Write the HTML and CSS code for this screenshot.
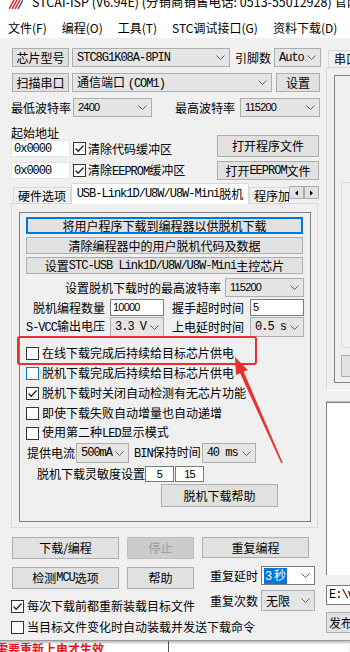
FILE: index.html
```html
<!DOCTYPE html>
<html lang="zh-CN">
<head>
<meta charset="utf-8">
<title>STCAI-ISP</title>
<link rel="stylesheet" href="styles.css">
</head>
<body>
<header class="titlebar">
  <svg class="logo" viewBox="0 0 14 9" aria-hidden="true">
    <path d="M0 9 L5 0 M3 9 L8 0 M6 9 L11 0" stroke="#e0262c" stroke-width="1.5" fill="none"/>
    <path d="M9 9 L14 0" stroke="#2a55a8" stroke-width="1.5" fill="none"/>
  </svg>
  <span class="title">STCAI-ISP (V6.94E) (分销商销售电话: 0513-55012928) 官网</span>
</header>
<nav class="menubar">
  <span>文件(F)</span><span>编程(O)</span><span>工具(T)</span><span>STC调试接口(G)</span><span>资料下载(D)</span><span>工</span>
</nav>
<main class="window">
  <section class="left">
    <div class="row r19">
      <div class="btn w57">芯片型号</div>
      <div class="sel w158 ml3"><span class="m">STC8G1K08A-8PIN</span><svg class="chev" viewBox="0 0 9 5"><path d="M.5 .5 4.5 4.5 8.5 .5"/></svg></div>
      <span class="ml5">引脚数</span>
      <div class="sel w47 ml3"><span class="m">Auto</span><svg class="chev" viewBox="0 0 9 5"><path d="M.5 .5 4.5 4.5 8.5 .5"/></svg></div>
    </div>
    <div class="row r19 mt6">
      <div class="btn w57">扫描串口</div>
      <div class="sel w200 ml3"><span>通信端口 <span class="m">(COM1)</span></span><svg class="chev" viewBox="0 0 9 5"><path d="M.5 .5 4.5 4.5 8.5 .5"/></svg></div>
      <div class="btn w44 ml4">设置</div>
    </div>
    <div class="row r19 mt6">
      <span class="lbl60 mln1">最低波特率</span>
      <div class="sel w79 ml2"><span class="s">2400</span><svg class="chev" viewBox="0 0 9 5"><path d="M.5 .5 4.5 4.5 8.5 .5"/></svg></div>
      <span class="lbl60 ml23">最高波特率</span>
      <div class="sel w80 ml5"><span class="s">115200</span><svg class="chev" viewBox="0 0 9 5"><path d="M.5 .5 4.5 4.5 8.5 .5"/></svg></div>
    </div>
    <div class="addr">
      <div class="addr-l">
        <div class="addr-title">起始地址</div>
        <div class="row r17">
          <div class="inp w59"><span class="m">0x0000</span></div>
          <span class="cb ml3"><svg class="ck" viewBox="0 0 11 11"><path d="M1.5 5.5 4.2 8.2 9.5 2.5"/></svg></span>
          <span class="ml2">清除代码缓冲区</span>
        </div>
        <div class="row r17 mt5">
          <div class="inp w59"><span class="m">0x0000</span></div>
          <span class="cb ml3"><svg class="ck" viewBox="0 0 11 11"><path d="M1.5 5.5 4.2 8.2 9.5 2.5"/></svg></span>
          <span class="ml2">清除<span class="m">EEPROM</span>缓冲区</span>
        </div>
      </div>
      <div class="addr-r">
        <div class="btn h22 mt10">打开程序文件</div>
        <div class="btn h19 mt4">打开<span class="m">EEPROM</span>文件</div>
      </div>
    </div>
    <div class="tabs">
      <div class="tab t1">硬件选项</div>
      <div class="tab active"><span class="m">USB-Link1D/U8W/U8W-Mini</span>脱机</div>
      <div class="tab t3"><span>程序加</span></div>
      <div class="spin"><span class="sp"><svg viewBox="0 0 4 7"><path d="M4 0 L0 3.5 L4 7Z"/></svg></span><span class="sp"><svg viewBox="0 0 4 7"><path d="M0 0 L4 3.5 L0 7Z"/></svg></span></div>
    </div>
    <div class="tabpanel">
      <div class="group">
        <div class="gbtn default">将用户程序下载到编程器以供脱机下载</div>
        <div class="gbtn mt3">清除编程器中的用户脱机代码及数据</div>
        <div class="gbtn mt3">设置<span class="m">STC-USB Link1D/U8W/U8W-Mini</span>主控芯片</div>
        <div class="row r19 mt4 baud">
          <span class="mr4">设置脱机下载时的最高波特率</span>
          <div class="sel w79"><span class="s">115200</span><svg class="chev" viewBox="0 0 9 5"><path d="M.5 .5 4.5 4.5 8.5 .5"/></svg></div>
        </div>
        <div class="grid4 r17 mt2">
          <span class="gl">脱机编程数量</span>
          <div class="inp dark"><span class="s">10000</span></div>
          <span class="gl">握手超时时间</span>
          <div class="inp dark"><span class="s">5</span></div>
        </div>
        <div class="grid4 r20 mt1">
          <span class="gl"><span class="m">S-VCC</span>输出电压</span>
          <div class="sel"><span class="m">3.3 V</span><svg class="chev" viewBox="0 0 9 5"><path d="M.5 .5 4.5 4.5 8.5 .5"/></svg></div>
          <span class="gl">上电延时时间</span>
          <div class="sel"><span class="m">0.5 s</span><svg class="chev" viewBox="0 0 9 5"><path d="M.5 .5 4.5 4.5 8.5 .5"/></svg></div>
        </div>
        <div class="cbs">
          <div class="cbrow"><span class="cb"></span><span>在线下载完成后持续给目标芯片供电</span></div>
          <div class="cbrow"><span class="cb hover"></span><span>脱机下载完成后持续给目标芯片供电</span></div>
          <div class="cbrow"><span class="cb"><svg class="ck" viewBox="0 0 11 11"><path d="M1.5 5.5 4.2 8.2 9.5 2.5"/></svg></span><span>脱机下载时关闭自动检测有无芯片功能</span></div>
          <div class="cbrow"><span class="cb"></span><span>即使下载失败自动增量也自动递增</span></div>
          <div class="cbrow"><span class="cb"></span><span>使用第二种<span class="m">LED</span>显示模式</span></div>
        </div>
        <div class="row r20 cur">
          <span>提供电流</span>
          <div class="sel w53 ml1"><span class="m">500mA</span><svg class="chev" viewBox="0 0 9 5"><path d="M.5 .5 4.5 4.5 8.5 .5"/></svg></div>
          <span class="ml5"><span class="m">BIN</span>保持时间</span>
          <div class="sel w54 ml1"><span class="m">40 ms</span><svg class="chev" viewBox="0 0 9 5"><path d="M.5 .5 4.5 4.5 8.5 .5"/></svg></div>
        </div>
        <div class="row r16 mt3 sens">
          <span class="w108">脱机下载灵敏度设置</span>
          <div class="inp dark w29 c"><span class="s">5</span></div>
          <div class="inp dark w29 c ml1"><span class="s">15</span></div>
        </div>
        <div class="btn helpbtn mt2">脱机下载帮助</div>
        <div class="redbox"></div>
        <svg class="arrow" viewBox="0 0 70 120" aria-hidden="true">
          <path d="M10 4 L22.8 16.9 L18.7 18.7 L57.7 109.7 L56.3 110.3 L15.1 20.3 L11 22.1 Z" fill="#e8302e"/>
        </svg>
      </div>
    </div>
    <div class="bottom">
      <div class="bl">
        <div class="row r22">
          <div class="btn w107">下载/编程</div>
          <div class="btn w67 ml8 disabled">停止</div>
        </div>
        <div class="row r22 mt8">
          <div class="btn w107">检测<span class="m">MCU</span>选项</div>
          <div class="btn w67 ml8">帮助</div>
        </div>
        <div class="row r16 mt9 mln1">
          <span class="cb"><svg class="ck" viewBox="0 0 11 11"><path d="M1.5 5.5 4.2 8.2 9.5 2.5"/></svg></span>
          <span class="ml3">每次下载前都重新装载目标文件</span>
        </div>
        <div class="row r16 mt5 mln1">
          <span class="cb"></span>
          <span class="ml3">当目标文件变化时自动装载并发送下载命令</span>
        </div>
      </div>
      <div class="br">
        <div class="btn w107 h21">重复编程</div>
        <div class="row r19 mt8">
          <span class="ml8">重复延时</span>
          <div class="sel w54 ml3 focus"><span class="hl"><span class="m">3</span>&nbsp;秒</span><svg class="chev" viewBox="0 0 9 5"><path d="M.5 .5 4.5 4.5 8.5 .5"/></svg></div>
        </div>
        <div class="row r21 mt5">
          <span class="ml8">重复次数</span>
          <div class="sel w54 ml3"><span>无限</span><svg class="chev" viewBox="0 0 9 5"><path d="M.5 .5 4.5 4.5 8.5 .5"/></svg></div>
        </div>
      </div>
    </div>
  </section>
  <section class="right">
    <div class="rtab">串口</div>
    <div class="rpanel">
      <div class="rbox">
        <div class="rbox2"></div>
        <div class="rbtn"></div>
      </div>
    </div>
    <div class="rsep"></div>
    <div class="rtext"></div>
    <div class="rinp"><span class="m">E:\v</span></div>
    <div class="rbtn2">发布</div>
  </section>
</main>
<footer class="below">
  <span class="warn">需要重新上电才生效</span>
  <span class="vline"></span>
</footer>
</body>
</html>
```

FILE: styles.css
```css
* { box-sizing: border-box; margin: 0; padding: 0; }
html, body { width: 350px; height: 652px; overflow: hidden; }
body {
  background: #f0f0f0;
  font-family: "Noto Sans CJK SC", "Noto Sans", sans-serif;
  font-size: 12px;
  line-height: 1;
  color: #000;
}
.m { font-family: "Liberation Mono", "DejaVu Sans Mono", monospace; font-size: 12px; letter-spacing: -1px; }
.s { font-family: "Liberation Sans", Arial, sans-serif; font-size: 11px; letter-spacing: -0.8px; }

.titlebar { height: 17px; background: #fff; display: flex; align-items: flex-start; overflow: hidden; }
.logo { width: 14px; height: 9px; margin-left: 9px; flex: none; }
.title { font-size: 12.5px; line-height: 12px; margin-top: -4px; margin-left: 9px; white-space: nowrap; }

.menubar { height: 21px; background: #fff; display: flex; align-items: center; padding-left: 8px; gap: 15px; white-space: nowrap; overflow: hidden; }

.window { display: flex; height: 602px; overflow: hidden; }
.left { width: 326px; flex: none; padding: 10px 0 0 12px; }
.right { flex: 1; overflow: hidden; }

.row { display: flex; align-items: center; white-space: nowrap; }

.btn {
  display: flex; align-items: center; justify-content: center;
  background: #e1e1e1; border: 1px solid #adadad; height: 100%; white-space: nowrap; flex: none;
}
.btn.disabled { background: #cccccc; border-color: #bfbfbf; color: #9a9a9a; }
.sel {
  display: flex; align-items: center; height: 100%;
  background: #e5e5e5; border: 1px solid #adadad;
  padding: 0 4px 0 4px; white-space: nowrap; flex: none; overflow: hidden;
}
.sel.focus { background: #fff; border-color: #7a7a7a; padding-left: 2px; }
.hl { background: #0078d7; color: #fff; padding: 1px 1px; }
.chev { width: 9px; height: 5px; fill: none; stroke: #606060; stroke-width: 1; margin-left: auto; flex: none; }
.inp {
  display: flex; align-items: center; height: 100%; background: #fff;
  border: 1px solid #e6e6e6; padding-left: 2px; flex: none; white-space: nowrap;
}
.inp.dark { border-color: #7a7a7a; }
.inp.c { justify-content: center; padding-left: 0; }
.cb { width: 13px; height: 13px; border: 1px solid #333; background: #fff; flex: none; display: flex; align-items: center; justify-content: center; }
.cb.hover { border-color: #0078d7; }
.ck { width: 11px; height: 11px; fill: none; stroke: #222; stroke-width: 1.3; }

.addr { display: flex; margin-top: 8px; margin-left: -1px; height: 55px; }
.addr-l { width: 206px; }
.addr-r { width: 102px; display: flex; flex-direction: column; }
.addr-title { height: 15px; line-height: 15px; }

.tabs { display: flex; align-items: flex-end; height: 20px; margin-top: 3px; margin-left: -1px; position: relative; z-index: 1; }
.tab { height: 16px; border: 1px solid #d9d9d9; border-bottom: none; background: #f0f0f0; display: flex; align-items: center; justify-content: center; white-space: nowrap; overflow: hidden; flex: none; }
.t1 { width: 58px; margin-left: 2px; }
.tab.active { width: 178px; height: 21px; background: #fff; margin-bottom: -1px; padding-bottom: 1px; }
.t3 { width: 40px; justify-content: flex-start; padding-left: 4px; border-right: none; }
.spin { display: flex; align-self: flex-start; margin-top: 3px; }
.sp { width: 15px; height: 13px; border: 1px solid #adadad; background: #e1e1e1; display: flex; align-items: center; justify-content: center; }
.sp svg { width: 3px; height: 6px; fill: #000; }

.tabpanel { width: 307px; height: 325px; margin-left: -1px; border: 1px solid #d9d9d9; background: #f0f0f0; padding: 8px 0 0 7px; }
.group { position: relative; width: 292px; height: 310px; border: 1px solid #808080; padding-top: 4px; }
.gbtn { margin-left: 6px; width: 277px; height: 17px; background: #e1e1e1; border: 1px solid #adadad; display: flex; align-items: center; justify-content: center; white-space: nowrap; }
.gbtn.default { border: 2px solid #0078d7; }
.baud { justify-content: flex-end; padding-right: 6px; }
.grid4 { display: grid; grid-template-columns: 90px 54px 86px 54px; align-items: stretch; white-space: nowrap; }
.grid4 > .gl { text-align: right; align-self: center; }
.grid4 > .gl:first-child { padding-right: 5px; }
.grid4 > .gl:nth-child(3) { padding-right: 6px; }
.cbs { margin-top: 6px; }
.cbrow { height: 20px; display: flex; align-items: center; padding-left: 6px; gap: 3px; white-space: nowrap; }
.cur { padding-left: 7px; }
.sens { padding-left: 17px; }
.helpbtn { width: 117px; height: 23px; margin-left: 141px; }
.redbox { position: absolute; left: -3px; top: 123px; width: 240px; height: 29px; border: 2.5px solid #e8302e; border-radius: 3px; }
.arrow { position: absolute; left: 205px; top: 140px; width: 70px; height: 120px; }

.bottom { display: flex; margin-top: 9px; }
.bl { width: 190px; }
.br { width: 118px; }

.rtab { margin-top: 12px; margin-left: 2px; height: 17px; border: 1px solid #d9d9d9; border-right: none; border-bottom: none; background: #f0f0f0; padding-left: 5px; display: flex; align-items: center; white-space: nowrap; }
.rpanel { height: 323px; border-left: 1px solid #d9d9d9; border-top: 1px solid #d9d9d9; padding: 7px 0 0 7px; }
.rbox { height: 308px; border: 1px solid #828282; border-right: none; padding: 106px 0 0 6px; }
.rbox2 { height: 166px; border: 1px solid #dcdcdc; border-right: none; }
.rbtn { margin-top: 7px; height: 22px; background: #e1e1e1; border: 1px solid #adadad; border-right: none; }
.rsep { height: 12px; border-top: 1px solid #fff; border-bottom: 1px solid #99c9ef; }
.rtext { height: 173px; background: #fff; border-left: 1px solid #828282; border-top: 1px solid #828282; }
.rinp { margin-top: 10px; height: 20px; background: #fff; border: 1px solid #7a7a7a; border-right: none; display: flex; align-items: center; padding-left: 2px; }
.rbtn2 { margin-top: 7px; height: 21px; background: #e1e1e1; border: 1px solid #adadad; border-right: none; display: flex; align-items: center; padding-left: 2px; white-space: nowrap; }

.below { height: 12px; background: #fff; display: flex; overflow: hidden; box-shadow: inset 0 2px 2px rgba(0,0,0,0.25); border-top: 1px solid #9a9a9a; }
.warn { width: 172px; flex: none; margin-left: -4px; color: #e8141b; font-weight: bold; font-size: 12px; line-height: 12px; margin-top: 2px; white-space: nowrap; }
.vline { width: 1px; height: 12px; background: #555; flex: none; }

/* spacing and size helpers (kept last so they win over component defaults) */
.r16 { height: 16px; } .r17 { height: 17px; } .r19 { height: 19px; } .r20 { height: 20px; } .r21 { height: 21px; } .r22 { height: 22px; }
.mt1 { margin-top: 1px; } .mt2 { margin-top: 2px; } .mt3 { margin-top: 3px; } .mt4 { margin-top: 4px; } .mt5 { margin-top: 5px; }
.mt6 { margin-top: 6px; } .mt8 { margin-top: 8px; } .mt9 { margin-top: 9px; } .mt10 { margin-top: 10px; }
.ml1 { margin-left: 1px; } .ml2 { margin-left: 2px; } .ml3 { margin-left: 3px; } .ml4 { margin-left: 4px; } .ml5 { margin-left: 5px; }
.ml8 { margin-left: 8px; } .ml23 { margin-left: 23px; } .mln1 { margin-left: -1px; } .mr4 { margin-right: 4px; }
.w29 { width: 29px; } .w44 { width: 44px; } .w47 { width: 47px; } .w53 { width: 53px; } .w54 { width: 54px; } .w57 { width: 57px; } .w59 { width: 59px; }
.w67 { width: 67px; } .w79 { width: 79px; } .w80 { width: 80px; } .w107 { width: 107px; } .w108 { width: 108px; } .w158 { width: 158px; } .w200 { width: 200px; }
.h19 { height: 19px; } .h21 { height: 21px; } .h22 { height: 22px; }
.lbl60 { width: 60px; }
```
